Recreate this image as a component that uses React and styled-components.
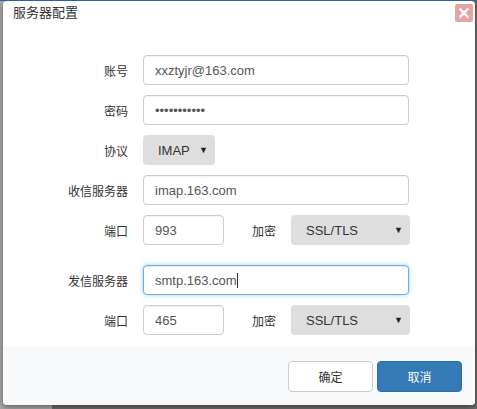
import React from 'react';
import styled, { createGlobalStyle } from 'styled-components';

const GlobalStyle = createGlobalStyle`
  html, body {
    margin: 0;
    padding: 0;
    background: #8e8e8e;
    font-family: "Liberation Sans", "Noto Sans CJK SC", sans-serif;
    overflow: hidden;
  }
`;

const Page = styled.div`
  width: 477px;
  height: 409px;
  background: linear-gradient(to bottom, #2f6db3 0, #2f6db3 1px, transparent 1px),
    linear-gradient(to right, #a9a9a9 0, #a9a9a9 52px, #6d6d6d 52px);
  padding: 1px 0 0 3px;
  box-sizing: border-box;
`;

const Dialog = styled.div`
  width: 472px;
  height: 404px;
  background: #fff;
  border-radius: 4px;
  box-shadow: 0 2px 6px rgba(0, 0, 0, 0.45);
  display: flex;
  flex-direction: column;
  overflow: hidden;
`;

const Header = styled.div`
  display: flex;
  align-items: flex-start;
  justify-content: space-between;
  padding: 2px 2px 0 10px;
  height: 30px;
  box-sizing: border-box;
`;

const Title = styled.div`
  font-family: "Noto Sans CJK SC", sans-serif;
  font-size: 13px;
  color: #333;
  line-height: 18px;
`;

const Close = styled.div`
  width: 18px;
  height: 18px;
  margin-top: 1px;
  background: #e6a3a3;
  border-radius: 2px;
  display: flex;
  align-items: center;
  justify-content: center;
`;

const Body = styled.div`
  flex: 1;
  padding: 24px 0 0 0;
  display: flex;
  flex-direction: column;
  gap: 10px;
`;

const Row = styled.div`
  display: flex;
  align-items: center;
  height: 30px;
  margin-top: ${(p) => (p.spaced ? '10px' : '0')};
`;

const Label = styled.div`
  width: 125px;
  margin-right: 15px;
  text-align: right;
  font-family: "Noto Sans CJK SC", sans-serif;
  font-size: 12px;
  color: #333;
  flex-shrink: 0;
`;

const InlineLabel = styled(Label)`
  width: auto;
  margin: 0 15px 0 28px;
`;

const Input = styled.input`
  box-sizing: border-box;
  width: ${(p) => p.w || 266}px;
  height: 30px;
  border: 1px solid ${(p) => (p.focused ? '#66afe9' : '#ccc')};
  box-shadow: ${(p) =>
    p.focused
      ? 'inset 0 1px 1px rgba(0,0,0,.075), 0 0 4px rgba(102,175,233,.6)'
      : 'inset 0 1px 1px rgba(0,0,0,.05)'};
  border-radius: 4px;
  padding: 0 11px;
  font-family: "Liberation Sans", sans-serif;
  font-size: 13px;
  color: #555;
  outline: none;
  background: #fff;
`;

const Select = styled.div`
  box-sizing: border-box;
  width: ${(p) => p.w}px;
  height: 30px;
  background: #dedede;
  border-radius: 4px;
  display: flex;
  align-items: center;
  justify-content: space-between;
  padding: 0 7px 0 15px;
  font-size: 13px;
  color: #333;
`;

const Arrow = styled.span`
  font-size: 9px;
  color: #222;
`;

const Footer = styled.div`
  height: 59px;
  background: #f8f9fb;
  display: flex;
  justify-content: flex-end;
  align-items: flex-start;
  gap: 4px;
  padding: 15px 13px 0 0;
  box-sizing: border-box;
`;

const Button = styled.div`
  box-sizing: border-box;
  width: 85px;
  height: 31px;
  border-radius: 4px;
  display: flex;
  align-items: center;
  justify-content: center;
  font-family: "Noto Sans CJK SC", sans-serif;
  font-size: 12px;
  background: ${(p) => (p.primary ? '#337ab7' : '#fff')};
  color: ${(p) => (p.primary ? '#fff' : '#333')};
  border: 1px solid ${(p) => (p.primary ? '#2e6da4' : '#ccc')};
`;

const Caret = styled.span`
  display: inline-block;
  width: 1px;
  height: 15px;
  background: #333;
  vertical-align: middle;
`;

const FakeInput = styled(Input).attrs({ as: 'div' })`
  display: flex;
  align-items: center;
`;

export default function App() {
  return (
    <>
      <GlobalStyle />
      <Page>
        <Dialog>
          <Header>
            <Title>服务器配置</Title>
            <Close>
              <svg width="10" height="10" viewBox="0 0 10 10">
                <path d="M1.5 1.5 L8.5 8.5 M8.5 1.5 L1.5 8.5" stroke="#fff" strokeWidth="2.4" strokeLinecap="square" />
              </svg>
            </Close>
          </Header>
          <Body>
            <Row>
              <Label>账号</Label>
              <Input readOnly defaultValue="xxztyjr@163.com" />
            </Row>
            <Row>
              <Label>密码</Label>
              <Input readOnly type="password" defaultValue="12345678901" />
            </Row>
            <Row>
              <Label>协议</Label>
              <Select w={72}>
                IMAP <Arrow>▼</Arrow>
              </Select>
            </Row>
            <Row>
              <Label>收信服务器</Label>
              <Input readOnly defaultValue="imap.163.com" />
            </Row>
            <Row>
              <Label>端口</Label>
              <Input readOnly w={81} defaultValue="993" />
              <InlineLabel>加密</InlineLabel>
              <Select w={119}>
                SSL/TLS <Arrow>▼</Arrow>
              </Select>
            </Row>
            <Row spaced>
              <Label>发信服务器</Label>
              <FakeInput focused>
                smtp.163.com<Caret />
              </FakeInput>
            </Row>
            <Row>
              <Label>端口</Label>
              <Input readOnly w={81} defaultValue="465" />
              <InlineLabel>加密</InlineLabel>
              <Select w={119}>
                SSL/TLS <Arrow>▼</Arrow>
              </Select>
            </Row>
          </Body>
          <Footer>
            <Button>确定</Button>
            <Button primary>取消</Button>
          </Footer>
        </Dialog>
      </Page>
    </>
  );
}
